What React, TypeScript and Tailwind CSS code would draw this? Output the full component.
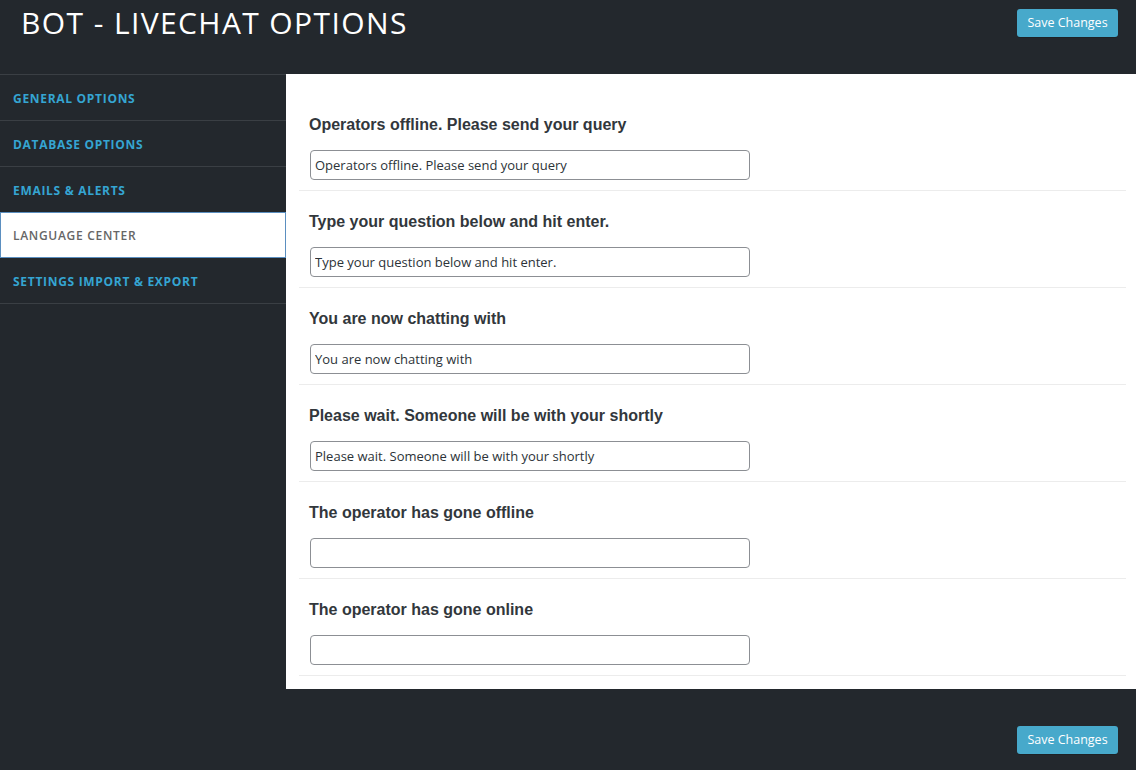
import React from 'react'

const NAV = [
  { label: 'General Options' },
  { label: 'Database Options' },
  { label: 'Emails & Alerts' },
  { label: 'Language Center', active: true },
  { label: 'Settings Import & Export' },
]

const FIELDS = [
  { label: 'Operators offline. Please send your query', value: 'Operators offline. Please send your query' },
  { label: 'Type your question below and hit enter.', value: 'Type your question below and hit enter.' },
  { label: 'You are now chatting with', value: 'You are now chatting with' },
  { label: 'Please wait. Someone will be with your shortly', value: 'Please wait. Someone will be with your shortly' },
  { label: 'The operator has gone offline', value: '' },
  { label: 'The operator has gone online', value: '' },
]

function SaveButton() {
  return (
    <button
      className="h-[28px] w-[101px] rounded-[3px] bg-[#47a9cb] text-[12.5px] text-white shadow-[0_1px_0_rgba(0,0,0,0.15)]"
      style={{ fontFamily: '"Open Sans", "Noto Sans", sans-serif' }}
    >
      Save Changes
    </button>
  )
}

function App() {
  const [values, setValues] = React.useState(FIELDS.map((f) => f.value))

  return (
    <div className="w-[1136px] h-[770px] bg-[#23282d] flex flex-col overflow-hidden">
      {/* header */}
      <div className="h-[74px] flex items-start justify-between pl-[21px] pr-[18px]">
        <h1
          className="mt-[3px] text-[30px] leading-[40px] tracking-[1.4px] text-white font-normal"
          style={{ fontFamily: '"Open Sans", "Noto Sans", sans-serif' }}
        >
          BOT - LIVECHAT OPTIONS
        </h1>
        <div className="mt-[9px]">
          <SaveButton />
        </div>
      </div>

      <div className="flex items-start">
        {/* sidebar */}
        <div className="w-[286px] shrink-0 border-t border-[#3a3f44]">
          {NAV.map((item) =>
            item.active ? (
              <div
                key={item.label}
                className="h-[46px] -mt-px flex items-center pl-[12px] pt-[2px] bg-white border border-[#5b8fc0] text-[#666] text-[12px] uppercase tracking-[0.7px] font-semibold"
                style={{ fontFamily: '"Open Sans", "Noto Sans", sans-serif' }}
              >
                {item.label}
              </div>
            ) : (
              <div
                key={item.label}
                className="h-[46px] flex items-center pl-[13px] pt-[3px] border-b border-[#3a3f44] text-[#35a5d2] text-[12px] uppercase tracking-[0.7px] font-bold"
                style={{ fontFamily: '"Open Sans", "Noto Sans", sans-serif' }}
              >
                {item.label}
              </div>
            )
          )}
        </div>

        {/* content */}
        <div className="flex-1 bg-white pt-[20px] pb-[13px] pl-[13px] pr-[10px]">
          {FIELDS.map((f, i) => (
            <div key={f.label} className="pt-[22px] pb-[10px] pl-[10px] border-b border-[#ececec]">
              <div
                className="h-[18px] leading-[18px] text-[16px] font-bold text-[#32373c]"
                style={{ fontFamily: '"Liberation Sans", Arial, sans-serif' }}
              >
                {f.label}
              </div>
              <input
                className="mt-[16px] block w-[440px] h-[30px] ml-px px-[4px] rounded-[4px] border border-[#8c8f94] text-[13px] text-[#2c3338] outline-none"
                style={{ fontFamily: '"Open Sans", "Noto Sans", sans-serif' }}
                value={values[i]}
                onChange={(e) => {
                  const next = [...values]
                  next[i] = e.target.value
                  setValues(next)
                }}
              />
            </div>
          ))}
        </div>
      </div>

      {/* footer */}
      <div className="flex justify-end pr-[18px] pt-[37px]">
        <SaveButton />
      </div>
    </div>
  )
}

export default App
